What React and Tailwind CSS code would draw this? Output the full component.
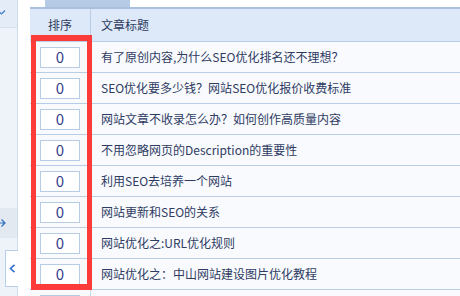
import React from "react";

const rows = [
  "有了原创内容,为什么SEO优化排名还不理想？",
  "SEO优化要多少钱？网站SEO优化报价收费标准",
  "网站文章不收录怎么办？如何创作高质量内容",
  "不用忽略网页的Description的重要性",
  "利用SEO去培养一个网站",
  "网站更新和SEO的关系",
  "网站优化之:URL优化规则",
  "网站优化之：中山网站建设图片优化教程",
  null,
];

export default function App() {
  return (
    <div
      className="w-[460px] h-[296px] flex overflow-hidden bg-white relative text-[12px] text-[#2f3b62]"
      style={{ fontFamily: '"Noto Sans CJK SC", "Noto Sans", sans-serif' }}
    >
      <div className="w-[18px] shrink-0 bg-[#eef3f9] border-r border-[#cfdcea] flex flex-col">
        <div className="h-[28px] bg-[#e4ecf8] border-b border-[#d6e1ef] relative overflow-hidden">
          <svg className="absolute left-[-3px] top-[9px]" width="9" height="7" viewBox="0 0 9 7">
            <path d="M1 1.5 L4.5 5 L8 1.5" fill="none" stroke="#3d7bc8" strokeWidth="1.2" />
          </svg>
        </div>
        <div className="mt-[180px] h-[30px] bg-[#e3e9f1] relative overflow-hidden">
          <svg className="absolute left-[-2px] top-[10px]" width="9" height="10" viewBox="0 0 9 10">
            <path d="M0 5 H7 M3.5 1.5 L7 5 L3.5 8.5" fill="none" stroke="#2f6fbf" strokeWidth="1.2" />
          </svg>
        </div>
      </div>
      <div className="absolute left-[5px] top-[250px] w-[13px] h-[37px] bg-white border border-r-0 border-[#b9cfe7] flex items-center justify-center">
        <svg width="7" height="9" viewBox="0 0 7 9">
          <path d="M5.5 0.8 L1.5 4.5 L5.5 8.2" fill="none" stroke="#2f6fcf" strokeWidth="1.6" />
        </svg>
      </div>
      <div className="w-[12px] shrink-0" />
      <div className="flex-1 flex flex-col relative">
        <div className="h-[7px] flex shrink-0">
          <div className="ml-[15px] w-[85px] bg-[#b5cae4]" />
        </div>
        <div className="h-[2px] bg-[#a8c0de] shrink-0" />
        <div className="h-[33px] shrink-0 flex bg-[#dde9f9] border-b border-[#b9cde5]">
          <div className="w-[61px] border-r border-[#b9cde5] flex items-center justify-center">排序</div>
          <div className="pl-[10px] flex items-center">文章标题</div>
        </div>
        {rows.map((t, i) => (
          <div key={i} className="h-[31px] shrink-0 flex bg-[#f8fafe] border-b border-[#b9cde5]">
            <div className="w-[61px] border-r border-[#c9d8ea] flex items-center justify-center">
              <div className="w-[40px] h-[21px] bg-white border border-[#b7cbe3] flex items-center justify-center text-[15px] text-[#34428a]">
                {t === null ? "" : "0"}
              </div>
            </div>
            <div className="pl-[10px] flex items-center whitespace-nowrap">{t}</div>
          </div>
        ))}
        <div className="absolute left-[1px] top-[35px] w-[61px] h-[255px] border-x-[5px] border-y-[6px] border-[#fc3b3b]" />
      </div>
    </div>
  );
}
